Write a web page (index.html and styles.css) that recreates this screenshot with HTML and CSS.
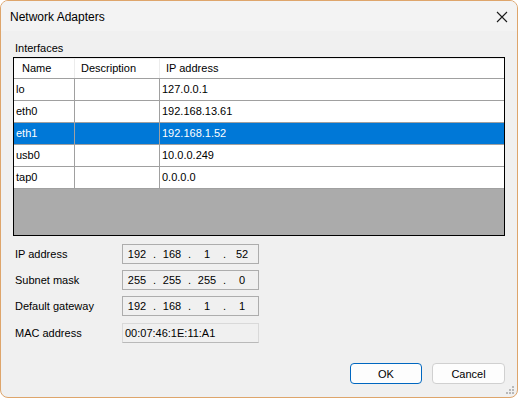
FILE: index.html
```html
<!DOCTYPE html>
<html>
<head>
<meta charset="utf-8">
<link rel="stylesheet" href="styles.css">
</head>
<body>
<div class="window">
  <div class="titlebar">
    <span class="title">Network Adapters</span>
    <svg class="close" width="12" height="12" viewBox="0 0 12 12"><path d="M1 1 L11 11 M11 1 L1 11" stroke="#1b1b1b" stroke-width="1.1" fill="none"/></svg>
  </div>
  <div class="content">
    <div class="group-label">Interfaces</div>
    <div class="list">
      <div class="row header">
        <div class="cell h1">Name</div>
        <div class="cell h2">Description</div>
        <div class="cell h3">IP address</div>
      </div>
      <div class="row"><div class="cell">lo</div><div class="cell"></div><div class="cell">127.0.0.1</div></div>
      <div class="row"><div class="cell">eth0</div><div class="cell"></div><div class="cell">192.168.13.61</div></div>
      <div class="row selected"><div class="cell">eth1</div><div class="cell"></div><div class="cell">192.168.1.52</div></div>
      <div class="row"><div class="cell">usb0</div><div class="cell"></div><div class="cell">10.0.0.249</div></div>
      <div class="row"><div class="cell">tap0</div><div class="cell"></div><div class="cell">0.0.0.0</div></div>
      <div class="empty"></div>
    </div>
    <div class="form">
      <div class="flabel">IP address</div>
      <div class="ipbox"><span class="oct">192</span><span class="dot">.</span><span class="oct">168</span><span class="dot">.</span><span class="oct">1</span><span class="dot">.</span><span class="oct">52</span></div>
      <div class="flabel">Subnet mask</div>
      <div class="ipbox"><span class="oct">255</span><span class="dot">.</span><span class="oct">255</span><span class="dot">.</span><span class="oct">255</span><span class="dot">.</span><span class="oct">0</span></div>
      <div class="flabel">Default gateway</div>
      <div class="ipbox"><span class="oct">192</span><span class="dot">.</span><span class="oct">168</span><span class="dot">.</span><span class="oct">1</span><span class="dot">.</span><span class="oct">1</span></div>
      <div class="flabel mac-row">MAC address</div>
      <div class="macbox mac-row">00:07:46:1E:11:A1</div>
    </div>
    <div class="buttons">
      <button class="btn default">OK</button>
      <button class="btn">Cancel</button>
    </div>
  </div>
  <svg class="grip" width="9" height="9" viewBox="0 0 9 9">
    <rect x="6" y="0" width="2" height="2" fill="#b8b8b8"/>
    <rect x="3" y="3" width="2" height="2" fill="#b8b8b8"/>
    <rect x="6" y="3" width="2" height="2" fill="#b8b8b8"/>
    <rect x="0" y="6" width="2" height="2" fill="#b8b8b8"/>
    <rect x="3" y="6" width="2" height="2" fill="#b8b8b8"/>
    <rect x="6" y="6" width="2" height="2" fill="#b8b8b8"/>
  </svg>
</div>
</body>
</html>
```

FILE: styles.css
```css
html, body {
  margin: 0;
  padding: 0;
  background: #ffffff;
}
body {
  width: 518px;
  height: 398px;
  overflow: hidden;
  font-family: "Liberation Sans", Arial, sans-serif;
  font-size: 11px;
  color: #000;
}
.window {
  position: relative;
  box-sizing: border-box;
  width: 518px;
  height: 398px;
  border: 1px solid #dea56b;
  border-radius: 8px;
  background: #f0f0f0;
  display: flex;
  flex-direction: column;
  overflow: hidden;
}
.titlebar {
  height: 30px;
  flex: none;
  background: #f3f3f3;
  display: flex;
  align-items: center;
  justify-content: space-between;
  padding: 0 9px 0 9px;
}
.title {
  font-family: "Liberation Sans", Arial, sans-serif;
  font-size: 12px;
  color: #000;
  padding-top: 1px;
}
.close {
  display: block;
  margin-top: 1px;
}
.content {
  flex: 1;
  display: flex;
  flex-direction: column;
  padding: 10px 12px 13px 12px;
}
.group-label {
  height: 14px;
  line-height: 14px;
  padding-left: 2px;
  margin-bottom: 2px;
}
.list {
  box-sizing: border-box;
  width: 492px;
  height: 179px;
  border: 1px solid #000;
  display: flex;
  flex-direction: column;
  background: #ababab;
}
.row {
  display: grid;
  grid-template-columns: 61px 85px 1fr;
  height: 22px;
  box-sizing: border-box;
  border-bottom: 1px solid #a0a0a0;
  background: #fff;
  flex: none;
}
.row .cell {
  line-height: 21px;
  padding-left: 2px;
  border-right: 1px solid #a0a0a0;
  white-space: nowrap;
  overflow: hidden;
}
.row .cell:last-child {
  border-right: none;
}
.row.header {
  height: 21px;
  border-top: 1px solid #ececec;
}
.row.header .cell {
  line-height: 19px;
  border-right: 1px solid #ececec;
}
.row.header .cell:last-child {
  border-right: none;
}
.row.header .h1 { padding-left: 8px; }
.row.header .h2 { padding-left: 6px; }
.row.header .h3 { padding-left: 6px; }
.row.selected {
  background: #0078d7;
  color: #fff;
}
.empty {
  flex: 1;
  background: #ababab;
}
.form {
  display: grid;
  grid-template-columns: 107px 137px;
  grid-auto-rows: 20px;
  row-gap: 6px;
  margin: 8px 0 0 2px;
  align-items: center;
}
.flabel {
  line-height: 20px;
}
.mac-row {
  margin-top: 1px;
}
.ipbox {
  box-sizing: border-box;
  width: 137px;
  height: 20px;
  border: 1px solid #adadad;
  background: #f0f0f0;
  display: grid;
  grid-template-columns: 28px 7px 28px 7px 28px 7px 28px;
  justify-content: start;
  align-items: center;
  line-height: 18px;
}
.oct {
  text-align: center;
}
.dot {
  text-align: center;
}
.macbox {
  box-sizing: border-box;
  height: 20px;
  border: 1px solid #d9d9d9;
  border-bottom-color: #b9b9b9;
  background: #f0f0f0;
  line-height: 18px;
  padding-left: 2px;
}
.buttons {
  margin-top: auto;
  display: flex;
  justify-content: flex-end;
  gap: 10px;
}
.btn {
  box-sizing: border-box;
  height: 21px;
  width: 73px;
  border: 1px solid #d0d0d0;
  border-radius: 4px;
  background: #fdfdfd;
  font-family: "Liberation Sans", Arial, sans-serif;
  font-size: 11px;
  color: #000;
  padding: 0;
}
.btn.default {
  width: 72px;
  border-color: #0067c0;
}
.grip {
  position: absolute;
  right: 2px;
  bottom: 2px;
}
```
